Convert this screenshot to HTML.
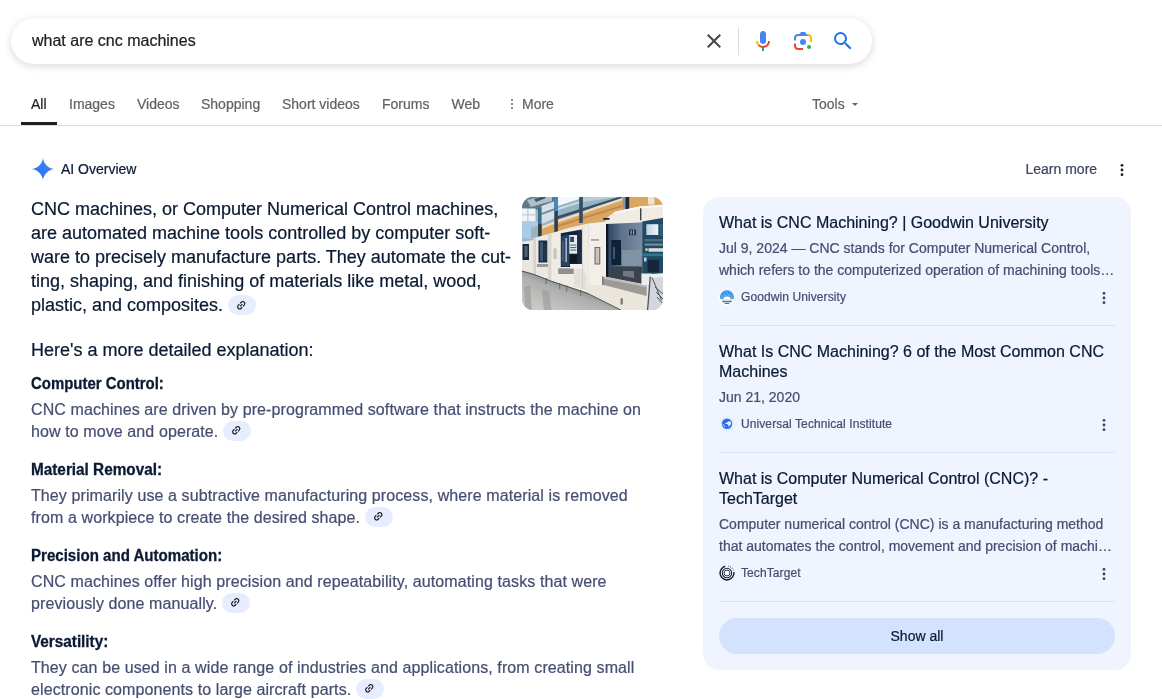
<!DOCTYPE html>
<html>
<head>
<meta charset="utf-8">
<style>
html,body{margin:0;padding:0;background:#fff;}
html{width:1162px;height:699px;overflow:hidden;}
body{width:1162px;height:699px;overflow:hidden;position:relative;font-family:"Liberation Sans",sans-serif;color:#1f1f1f;-webkit-text-stroke:0.22px;}
.abs{position:absolute;}
#sbox{left:11px;top:18px;width:861px;height:46px;border-radius:24px;background:#fff;box-shadow:0 2px 7px 1px rgba(64,60,80,.16);}
#q{left:32px;top:32px;font-size:16px;line-height:18px;color:#202124;white-space:nowrap;}
.tab{top:96px;font-size:14px;line-height:16px;color:#5f6368;white-space:nowrap;}
#tabline{left:0;top:125px;width:1162px;height:1px;background:#dadce0;}
#tabsel{left:21px;top:122px;width:36px;height:3px;background:#1f1f1f;}
.aio{font-size:14px;line-height:16px;white-space:nowrap;}
#main{left:31px;top:197px;width:485px;font-size:18px;line-height:24px;color:#0a1a33;}
#main div{white-space:nowrap;}
.h{left:31px;font-size:16px;line-height:18px;transform-origin:0 50%;-webkit-text-stroke:0.3px #0a1a33;font-weight:bold;color:#0a1a33;white-space:nowrap;}
.p{left:31px;font-size:16px;line-height:22px;color:#464e72;white-space:nowrap;letter-spacing:0.1px;}
.p .chip{top:-2px;}
.chip{display:inline-block;width:28px;height:20px;border-radius:10px;background:#e5edff;vertical-align:middle;position:relative;top:-1px;margin-left:0px;}
.chip svg{position:absolute;left:8.300px;top:4.700px;}
#panel{left:703px;top:197px;width:428px;height:473px;border-radius:16px;background:#f0f4fe;}
.t{left:719px;font-size:16px;line-height:20px;color:#0a1a33;white-space:nowrap;}
.s{left:719px;font-size:14px;line-height:22px;color:#464e72;white-space:nowrap;}
.src{left:741px;font-size:12px;line-height:14px;color:#464e72;white-space:nowrap;letter-spacing:0.09px;}
.sep{left:719px;width:396px;height:1px;background:#d3e3fd;}
.kebab{width:3px;}
.kebab i{display:block;width:3px;height:3px;border-radius:50%;background:#444;margin-bottom:2px;}
#showall{left:719px;top:618px;width:396px;height:36px;border-radius:18px;background:#d3e3fd;text-align:center;font-size:14px;line-height:36px;color:#0a1a33;}
</style>
</head>
<body>
<div id="wrap" style="position:absolute;left:0;top:0;width:1162px;height:699px;overflow:hidden;will-change:transform">
<!-- search box -->
<div id="sbox" class="abs"></div>
<div id="q" class="abs">what are cnc machines</div>
<svg class="abs" style="left:702px;top:29px" width="24" height="24" viewBox="0 0 24 24"><path d="M19 6.41L17.59 5 12 10.59 6.41 5 5 6.41 10.59 12 5 17.59 6.41 19 12 13.41 17.59 19 19 17.59 13.41 12z" fill="#46464a"/></svg>
<div class="abs" style="left:738px;top:27px;width:1px;height:28px;background:#dadce0"></div>
<!-- mic -->
<svg class="abs" style="left:751px;top:29px" width="24" height="24" viewBox="0 0 24 24"><path fill="#4285f4" d="M12 15c1.66 0 3-1.31 3-2.97v-7.02c0-1.66-1.34-3.01-3-3.01s-3 1.34-3 3.01v7.02c0 1.66 1.34 2.97 3 2.97z"/><path fill="#34a853" d="M11 18.08h2v3.92h-2z"/><path fill="#fbbc04" d="M7.05 16.87c-1.27-1.33-2.05-2.83-2.05-4.87h2c0 1.45 0.56 2.42 1.47 3.38v0.32l-1.15 1.18z"/><path fill="#ea4335" d="M12 16.93a4.97 5.25 0 0 1 -3.54 -1.55l-1.41 1.49c1.26 1.34 3.02 2.13 4.95 2.13 3.87 0 6.99-2.92 6.99-7h-1.99c0 2.92-2.24 4.93-5 4.93z"/></svg>
<!-- lens -->
<svg class="abs" style="left:791px;top:29px" width="24" height="24" viewBox="0 0 192 192"><rect fill="none" height="192" width="192"/><g><circle fill="#34a853" cx="144.07" cy="144" r="16"/><circle fill="#4285f4" cx="96.07" cy="104" r="24"/><path fill="#ea4335" d="M24,135.2c0,18.11,14.69,32.8,32.8,32.8H96v-16l-40.1-0.1c-8.8,0-15.9-8.19-15.9-17.9v-18H24V135.2z"/><path fill="#fbbc04" d="M168,72.8c0-18.11-14.69-32.8-32.8-32.8H116l20,16c8.8,0,16,8.29,16,18v30h16V72.8z"/><path fill="#4285f4" d="M112,24l-32,0L68,40H56.8C38.69,40,24,54.69,24,72.8V92h16V74c0-9.71,7.2-18,16-18h80L112,24z"/></g></svg>
<!-- search -->
<svg class="abs" style="left:831px;top:29px" width="24" height="24" viewBox="0 0 24 24"><path fill="#1a73e8" d="M15.5 14h-.79l-.28-.27A6.471 6.471 0 0 0 16 9.5 6.5 6.5 0 1 0 9.5 16c1.61 0 3.09-.59 4.23-1.57l.27.28v.79l5 4.99L20.490 19l-4.990-5zm-6 0C7.010 14 5 11.990 5 9.500S7.010 5 9.500 5 14 7.010 14 9.500 11.990 14 9.500 14z"/></svg>

<!-- tabs -->
<div class="tab abs" style="left:31px;color:#1f1f1f">All</div>
<div class="tab abs" style="left:69px">Images</div>
<div class="tab abs" style="left:137px">Videos</div>
<div class="tab abs" style="left:201px">Shopping</div>
<div class="tab abs" style="left:282px">Short videos</div>
<div class="tab abs" style="left:382px">Forums</div>
<div class="tab abs" style="left:451.500px">Web</div>
<div class="abs kebab" style="left:511px;top:99px;width:2px"><i style="width:2px;height:2px;margin-bottom:2px;background:#5f6368"></i><i style="width:2px;height:2px;margin-bottom:2px;background:#5f6368"></i><i style="width:2px;height:2px;background:#5f6368"></i></div>
<div class="tab abs" style="left:522px">More</div>
<div class="tab abs" style="left:812px">Tools</div>
<div class="abs" style="left:852px;top:103px;width:0;height:0;border-left:3.5px solid transparent;border-right:3.5px solid transparent;border-top:3.5px solid #5f6368"></div>
<div id="tabline" class="abs"></div>
<div id="tabsel" class="abs"></div>

<!-- AI overview header -->
<svg class="abs" style="left:31px;top:157px" width="24" height="24" viewBox="0 0 24 24"><defs><linearGradient id="g1" x1="0" y1="1" x2="1" y2="0"><stop offset="0" stop-color="#2e6bf0"/><stop offset="1" stop-color="#3b8cf8"/></linearGradient></defs><path fill="url(#g1)" d="M12 .4C12 6 18 12 23.600 12 18 12 12 18 12 23.600 12 18 6 12 .4 12 6 12 12 6 12 .4z"/></svg>
<div class="aio abs" style="left:61px;top:161px;color:#0a1a33">AI Overview</div>
<div class="aio abs" style="left:1025.500px;top:161px;color:#3c4460">Learn more</div>
<svg class="abs" style="left:1119.2px;top:163.0px" width="6" height="14" viewBox="0 0 6 14"><g fill="#1f1f1f"><circle cx="3" cy="2.350" r="1.400"/><circle cx="3" cy="7" r="1.400"/><circle cx="3" cy="11.650" r="1.400"/></g></svg>

<!-- main paragraph -->
<div id="main" class="abs">
<div>CNC machines, or Computer Numerical Control machines,</div>
<div>are automated machine tools controlled by computer soft-</div>
<div>ware to precisely manufacture parts. They automate the cut-</div>
<div>ting, shaping, and finishing of materials like metal, wood,</div>
<div>plastic, and composites. <span class="chip"><svg width="10.500" height="10.500" viewBox="0 0 24 24"><g transform="rotate(-45 12 12)" fill="none" stroke="#111" stroke-width="2.500"><path d="M10.700 7.300H7a4.700 4.700 0 0 0 0 9.400h3.700"/><path d="M13.300 7.300H17a4.700 4.700 0 0 1 0 9.400h-3.700"/><path d="M8.300 12h7.400"/></g></svg></span></div>
</div>

<!-- image placeholder -->
<div id="img" class="abs" style="left:522px;top:197px;width:141px;height:113px;border-radius:11px;overflow:hidden;background:#c9ccd0"><svg width="141" height="113" viewBox="0 0 141 113" style="display:block">
<defs>
<filter id="bl" x="-5%" y="-5%" width="110%" height="110%"><feGaussianBlur stdDeviation="0.6"/></filter>
<linearGradient id="fl" gradientUnits="userSpaceOnUse" x1="42" y1="86" x2="28" y2="124"><stop offset="0" stop-color="#8e9292"/><stop offset=".2" stop-color="#adaeae"/><stop offset=".6" stop-color="#c2c1bd"/><stop offset="1" stop-color="#d2d0cb"/></linearGradient>
<linearGradient id="inr" x1="0" y1="0" x2="1" y2="0"><stop offset="0" stop-color="#2c4360"/><stop offset=".4" stop-color="#5d728b"/><stop offset="1" stop-color="#7b8da2"/></linearGradient>
<linearGradient id="scr" x1="0" y1="0" x2="1" y2="0"><stop offset="0" stop-color="#b5d3e4"/><stop offset="1" stop-color="#f3f6f8"/></linearGradient>
</defs>
<rect width="141" height="113" fill="#b8c6cf"/>
<g filter="url(#bl)">
<!-- roof / sky -->
<rect x="-2" y="-2" width="145" height="50" fill="#9fb6c4"/>
<polygon points="-2,-2 34,-2 34,6 14,13 -2,11" fill="#5f7886"/>
<polygon points="5,3 16,0 30,-1 30,4 9,10" fill="#aebfca"/>
<polygon points="12,2 22,-1 24,1 14,5" fill="#3d5868"/>
<rect x="-2" y="11.500" width="15.500" height="13" fill="#eef3f8"/>
<rect x="-2" y="17.500" width="15.500" height=".8" fill="#a9b9c6"/>
<rect x="5.500" y="11.500" width=".8" height="13" fill="#a9b9c6"/>
<rect x="-2" y="24.500" width="19" height="17" fill="#a9cbe8"/>
<polygon points="9,31 17,28 17,41 9,41" fill="#9fb0bf"/>
<polygon points="19.500,9 33,4 33,21 19.500,27" fill="#d4e0e9"/>
<polygon points="19.500,16 33,11 33,13 19.500,18" fill="#6f8c9e"/>
<polygon points="36,-2 58,-2 58,2 36,9" fill="#f5f8fa"/>
<polygon points="36,9 58,2 104,-2 104,0 58,14 36,21" fill="#93b3c6"/>
<polygon points="36,11 58,4 58,6 36,13" fill="#cfdde6"/>
<polygon points="61,1 103,-3 103,-1 61,5" fill="#bccdd8"/>
<polygon points="36,19 58,12 100,-1 100,1.500 58,15 36,22" fill="#3b5060"/>
<!-- orange wall -->
<polygon points="19.500,30 36,24.500 58,17 73,11.500 104,1 104,-2 143,-2 143,14 88,22 66,29 19.500,44" fill="#dba562"/>
<polygon points="19.500,29.500 36,23 58,15.500 73,10 100,1 100,3.500 73,12.500 58,18 36,25.500 19.500,32" fill="#ebdcc8"/>
<polygon points="36,28 58,21 100,8 100,10 58,23 36,30" fill="#bd8b50"/>
<rect x="126" y="-2" width="6.500" height="9.500" fill="#efe2cf"/>
<!-- columns -->
<rect x="16" y="11" width="3.500" height="30" fill="#3a6c88"/>
<rect x="16.300" y="27" width="3.200" height="14" fill="#2b3a44"/>
<rect x="32.300" y="-2" width="3.600" height="37" fill="#2d414e"/>
<rect x="32.300" y="-2" width="3.600" height="16" fill="#3f8ccb"/>
<rect x="57.200" y="-2" width="3.600" height="28" fill="#33505f"/>
<rect x="100.800" y="-2" width="3" height="14" fill="#8a97a5"/>
<rect x="103.500" y="-2" width="3.700" height="14" fill="#1d2c3a"/>
<!-- floor -->
<polygon points="-2,73 12,77 30,84 66,96 104,115 -2,115" fill="url(#fl)"/>
<polygon points="2,90 8,88 10,115 3,115" fill="#9c9d9c" opacity=".7"/>
<polygon points="20,92 27,94 30,115 22,115" fill="#9a9b9a" opacity=".6"/>
<!-- machine 4 (far left) -->
<polygon points="-2,45 12,43 12,77 -2,73" fill="#e9e6df"/>
<rect x="0.500" y="47" width="6.500" height="16" fill="#1f2a38"/>
<rect x="2.500" y="49" width="3" height="11" fill="#4f637b"/>
<!-- machine 3 -->
<polygon points="11.500,41 26.500,37 30,37 30,84 11.500,77" fill="#ece9e2"/>
<polygon points="11.500,41 14,40.500 14,78 11.500,77" fill="#d5d2cb"/>
<rect x="16.500" y="43.500" width="8.800" height="22" fill="#1c2b3d"/>
<rect x="18" y="45" width="3" height="19" fill="#3f5877"/>
<rect x="21.500" y="47" width="3" height="16" fill="#22364f"/>
<rect x="15" y="67" width="11" height="3" fill="#9a9a98"/>
<!-- machine 2 -->
<polygon points="26,37.200 46.400,31 66.300,26.500 66.300,96 30,84 26,82.500" fill="#efece5"/>
<polygon points="26,37.200 29.500,36.200 29.500,84 26,82.500" fill="#dad7d0"/>
<rect x="31.300" y="51.400" width="3.500" height="10.600" fill="#c9c6be"/>
<polygon points="38.800,36.300 59.700,32.500 59.700,70 38.800,70" fill="#16243a"/>
<polygon points="39.300,39 47.300,37.500 47.300,69 39.300,69" fill="#2c4562"/>
<rect x="43.300" y="41" width="1.700" height="24" fill="#9bb0c5"/>
<rect x="40.300" y="44" width="1.200" height="20" fill="#52688a"/>
<rect x="47.300" y="38" width="8" height="18.700" fill="#e4eaee"/>
<rect x="48.200" y="39.800" width="3.800" height="5.200" fill="#2c4666"/>
<rect x="48.200" y="47.500" width="6.200" height="1.100" fill="#506a88"/>
<rect x="48.200" y="50" width="6.200" height="1.100" fill="#506a88"/>
<rect x="48.200" y="52.500" width="6.200" height="1.100" fill="#506a88"/>
<rect x="48" y="57.600" width="7.200" height="8" fill="#0c1624"/>
<rect x="55.200" y="34" width="4.500" height="36" fill="#1a2b45"/>
<rect x="36.200" y="71.300" width="15.500" height="5.700" fill="#8f8f8f"/>
<rect x="48" y="67" width="12" height="4.500" fill="#f3f1ec"/>
<polygon points="52,72 62,72 64.500,80 64.500,93 52,89" fill="#e4e0d7"/>
<rect x="60" y="30" width="1" height="62" fill="#d5d2ca"/>
<!-- legs -->
<rect x="23.500" y="81" width="1.300" height="6" fill="#77797a"/>
<rect x="37" y="86" width="1.300" height="6" fill="#77797a"/>
<rect x="44" y="88.500" width="1.300" height="6" fill="#77797a"/>
<rect x="58" y="93" width="1.300" height="6" fill="#77797a"/>
<!-- machine base shadow line -->
<polygon points="-2,73 12,77 30,84 66,96 104,115 102,115 66,97 30,85 12,78 -2,74" fill="#4a4f51"/>
<!-- front machine: left face -->
<polygon points="66.300,26.500 84.500,24.500 84.500,104 66.300,96" fill="#f2efe8"/>
<rect x="69" y="42" width="8" height="1.800" fill="#a9a69e"/>
<rect x="72.500" y="50" width="5.800" height="17.500" fill="#6e6c68"/>
<rect x="73.600" y="51" width="3.600" height="15.500" fill="#c9c5bb"/>
<!-- interior -->
<rect x="85.500" y="25" width="35" height="62" fill="url(#inr)"/>
<rect x="84" y="25" width="2.300" height="66" fill="#10192a"/>
<rect x="89.300" y="43" width="9.700" height="25" fill="#0f2038"/>
<rect x="91" y="50" width="2" height="12" fill="#3d5578"/>
<rect x="100" y="53" width="19.500" height="16" fill="#8292a5"/>
<rect x="107" y="32.600" width="7" height="5.600" fill="#222e3e"/>
<rect x="108.500" y="33.300" width="1.200" height="4.300" fill="#9aa3ad"/>
<rect x="111" y="33.300" width="1.200" height="4.300" fill="#9aa3ad"/>
<polygon points="88,69.500 120,69.500 120,87 88,82" fill="#3b4250"/>
<polygon points="101,74 112,74 112,81 101,79" fill="#707884"/>
<!-- machine top box -->
<path d="M84,27 Q82,23 86,20 L92.800,14.800 L117.600,9.500 L143,7.600 L143,21 L117.600,25.500 Z" fill="#f0ece3"/>
<polygon points="92.800,14.800 117.600,9.500 143,7.600 143,9.500 117.600,11.500 92.800,17" fill="#faf8f4"/>
<rect x="118" y="11.300" width="1.400" height="12" fill="#3d4348"/>
<rect x="81.300" y="21" width="6.200" height="1.800" fill="#1d2024"/>
<!-- control panel -->
<polygon points="120.300,24.500 143,20.500 143,77 120.300,77" fill="#234a63"/>
<rect x="124.300" y="27.200" width="12" height="10.800" fill="url(#scr)"/>
<rect x="137.500" y="27" width="5" height="12" fill="#2f5d76"/>
<rect x="122.500" y="42" width="20" height="2.500" fill="#4b6c7f"/>
<rect x="122.500" y="46.500" width="20" height="2.200" fill="#6f8c9b"/>
<rect x="126.500" y="51.200" width="16" height="3.500" fill="#d9dfe2"/>
<circle cx="124.500" cy="52.500" r="1.500" fill="#c9c3b2"/>
<rect x="120.300" y="56.500" width="23" height="2.700" fill="#2a7a94"/>
<rect x="122" y="60.500" width="2.500" height="4" fill="#b9d3e2"/>
<rect x="125.600" y="62.800" width="11.500" height="12.500" fill="#12263a"/>
<!-- lower body & tray -->
<polygon points="80,79 126,88 131,113 104,115 66.300,96 66.300,88 80,88" fill="#ebe6dc"/>
<polygon points="80,79.600 89.300,81.400 124.700,88.500 124.700,99 80,87.600" fill="#9c9a96"/>
<polygon points="80,79.600 89.300,81.400 124.700,88.500 124.700,90.300 80,81.500" fill="#c1bfba"/>
<rect x="80" y="79.600" width="1.600" height="8.300" fill="#77777a"/>
<rect x="98.600" y="101.300" width="2.200" height="6.200" fill="#77766f"/>
<!-- right bottom: white box + conveyor -->
<rect x="119.400" y="76.500" width="10" height="11.500" fill="#eceded"/>
<polygon points="129,78 143,77 143,115 126,115 127,88 129,88" fill="#d3d7dc"/>
<polygon points="129,77 143,76 143,80 129,81" fill="#eef0f2"/>
<g stroke="#4d5359" fill="none">
<line x1="128.300" y1="79.600" x2="125.600" y2="113" stroke-width="1.300"/>
<line x1="130" y1="80.500" x2="139.500" y2="103" stroke-width="1"/>
<line x1="133" y1="90" x2="141" y2="97" stroke-width="1"/>
<line x1="134" y1="95" x2="141" y2="102" stroke-width="1"/>
<line x1="135" y1="100" x2="141" y2="107" stroke-width="1"/>
</g>
</g>
</svg></div>

<div class="abs" style="left:31px;top:338px;font-size:18px;line-height:24px;color:#0a1a33;white-space:nowrap">Here's a more detailed explanation:</div>

<div class="h abs" style="top:375px;transform:scaleX(0.934)">Computer Control:</div>
<div class="p abs" style="top:399px">CNC machines are driven by pre-programmed software that instructs the machine on<br>how to move and operate. <span class="chip"><svg width="10.500" height="10.500" viewBox="0 0 24 24"><g transform="rotate(-45 12 12)" fill="none" stroke="#111" stroke-width="2.500"><path d="M10.700 7.300H7a4.700 4.700 0 0 0 0 9.400h3.700"/><path d="M13.300 7.300H17a4.700 4.700 0 0 1 0 9.400h-3.700"/><path d="M8.300 12h7.400"/></g></svg></span></div>

<div class="h abs" style="top:461px;transform:scaleX(0.957)">Material Removal:</div>
<div class="p abs" style="top:485px">They primarily use a subtractive manufacturing process, where material is removed<br>from a workpiece to create the desired shape. <span class="chip"><svg width="10.500" height="10.500" viewBox="0 0 24 24"><g transform="rotate(-45 12 12)" fill="none" stroke="#111" stroke-width="2.500"><path d="M10.700 7.300H7a4.700 4.700 0 0 0 0 9.400h3.700"/><path d="M13.300 7.300H17a4.700 4.700 0 0 1 0 9.400h-3.700"/><path d="M8.300 12h7.400"/></g></svg></span></div>

<div class="h abs" style="top:547px;transform:scaleX(0.942)">Precision and Automation:</div>
<div class="p abs" style="top:571px">CNC machines offer high precision and repeatability, automating tasks that were<br>previously done manually. <span class="chip"><svg width="10.500" height="10.500" viewBox="0 0 24 24"><g transform="rotate(-45 12 12)" fill="none" stroke="#111" stroke-width="2.500"><path d="M10.700 7.300H7a4.700 4.700 0 0 0 0 9.400h3.700"/><path d="M13.300 7.300H17a4.700 4.700 0 0 1 0 9.400h-3.700"/><path d="M8.300 12h7.400"/></g></svg></span></div>

<div class="h abs" style="top:633px;transform:scaleX(0.955)">Versatility:</div>
<div class="p abs" style="top:657px">They can be used in a wide range of industries and applications, from creating small<br>electronic components to large aircraft parts. <span class="chip"><svg width="10.500" height="10.500" viewBox="0 0 24 24"><g transform="rotate(-45 12 12)" fill="none" stroke="#111" stroke-width="2.500"><path d="M10.700 7.300H7a4.700 4.700 0 0 0 0 9.400h3.700"/><path d="M13.300 7.300H17a4.700 4.700 0 0 1 0 9.400h-3.700"/><path d="M8.300 12h7.400"/></g></svg></span></div>

<!-- right panel -->
<div id="panel" class="abs"></div>
<div class="t abs" style="top:213px">What is CNC Machining? | Goodwin University</div>
<div class="s abs" style="top:237px">Jul 9, 2024 — CNC stands for Computer Numerical Control,<br>which refers to the computerized operation of machining tools…</div>
<svg class="abs" style="left:719px;top:289px" width="16" height="16" viewBox="0 0 16 16"><circle cx="8" cy="8" r="8" fill="#fff"/><path d="M1.260 9.900A7 7 0 1 1 14.740 9.900Z" fill="#4aa3ea"/><ellipse cx="8" cy="9.600" rx="3.300" ry="2" fill="#fff"/><g fill="#2f6fe4"><circle cx="3.400" cy="4.500" r=".6"/><circle cx="6.300" cy="3.500" r=".6"/><circle cx="9.500" cy="3.500" r=".6"/><circle cx="11.500" cy="4.500" r=".6"/></g><g fill="#c4e3fa"><circle cx="3.400" cy="8.400" r=".45"/><circle cx="6.300" cy="6.700" r=".45"/><circle cx="9.500" cy="6.700" r=".45"/><circle cx="12.500" cy="8.400" r=".45"/></g><path d="M1.900 10.400h12.200l-.6 1.300H2.500z" fill="#dcc7b5"/><path d="M2.800 11.900h10.400l-1 1.400H3.800z" fill="#2f7f9d"/><path d="M3.800 13.300h8.400l-.9.700H4.700z" fill="#a9c9d8"/><path d="M5.200 14h5.600l-1.200.900H6.400z" fill="#2f7f9d"/><rect x="6.200" y="12.200" width="1" height=".8" fill="#4aa3ea"/><rect x="8.800" y="12.200" width="1" height=".8" fill="#4aa3ea"/></svg>
<div class="src abs" style="top:290px">Goodwin University</div>
<svg class="abs" style="left:1101.1px;top:291.0px" width="6" height="14" viewBox="0 0 6 14"><g fill="#3a4266"><circle cx="3" cy="2.350" r="1.400"/><circle cx="3" cy="7" r="1.400"/><circle cx="3" cy="11.650" r="1.400"/></g></svg>
<div class="sep abs" style="top:325px"></div>

<div class="t abs" style="top:342px">What Is CNC Machining? 6 of the Most Common CNC<br>Machines</div>
<div class="s abs" style="top:386px">Jun 21, 2020</div>
<svg class="abs" style="left:719px;top:416px" width="16" height="16" viewBox="0 0 16 16"><circle cx="8" cy="8" r="8" fill="#e6eefc"/><circle cx="8" cy="7.700" r="5.200" fill="#2a6fe8"/><path d="M6.300 7.200c1-.2 1.800-.2 2.300-1.100.5-.9 1.700-1 2.600-.5.800.5 1.200 1.500.8 2.400-.3.600-1 .8-1.300 1.500-.2.500-.4 1-.9.900-.6-.1-.4-.9-.6-1.400-.3-.7-1.200-.9-1.900-.9-.6 0-1.300 0-1-.9z" fill="#eaf1fd"/><path d="M4 8.300c.4 1 1 1.900 1.900 2.500" stroke="#eaf1fd" stroke-width=".8" fill="none" stroke-linecap="round"/></svg>
<div class="src abs" style="top:417px">Universal Technical Institute</div>
<svg class="abs" style="left:1101.1px;top:418.0px" width="6" height="14" viewBox="0 0 6 14"><g fill="#3a4266"><circle cx="3" cy="2.350" r="1.400"/><circle cx="3" cy="7" r="1.400"/><circle cx="3" cy="11.650" r="1.400"/></g></svg>
<div class="sep abs" style="top:452px"></div>

<div class="t abs" style="top:469px">What is Computer Numerical Control (CNC)? -<br>TechTarget</div>
<div class="s abs" style="top:513px">Computer numerical control (CNC) is a manufacturing method<br>that automates the control, movement and precision of machi…</div>
<svg class="abs" style="left:719px;top:564.800px" width="16" height="16" viewBox="0 0 16 16"><circle cx="8" cy="8" r="7.800" fill="#f8fafe"/><g fill="none" stroke="#14233a"><path d="M6.300 1.300A6.900 6.900 0 1 0 14.850 7.200" stroke-width="1.500"/><path d="M9.200 1.200A6.900 6.900 0 0 1 14.600 5.700" stroke-width="1.100" stroke-dasharray=".9 1.100" stroke="#4a5a74"/><circle cx="8" cy="8" r="4.700" stroke-width="1.100"/><circle cx="8" cy="8" r="2.900" stroke-width="1"/></g><circle cx="8" cy="8" r="2.300" fill="#fff"/></svg>
<div class="src abs" style="top:566px">TechTarget</div>
<svg class="abs" style="left:1101.1px;top:567.0px" width="6" height="14" viewBox="0 0 6 14"><g fill="#3a4266"><circle cx="3" cy="2.350" r="1.400"/><circle cx="3" cy="7" r="1.400"/><circle cx="3" cy="11.650" r="1.400"/></g></svg>
<div class="sep abs" style="top:601px"></div>
<div id="showall" class="abs">Show all</div>
</div>
</body>
</html>
